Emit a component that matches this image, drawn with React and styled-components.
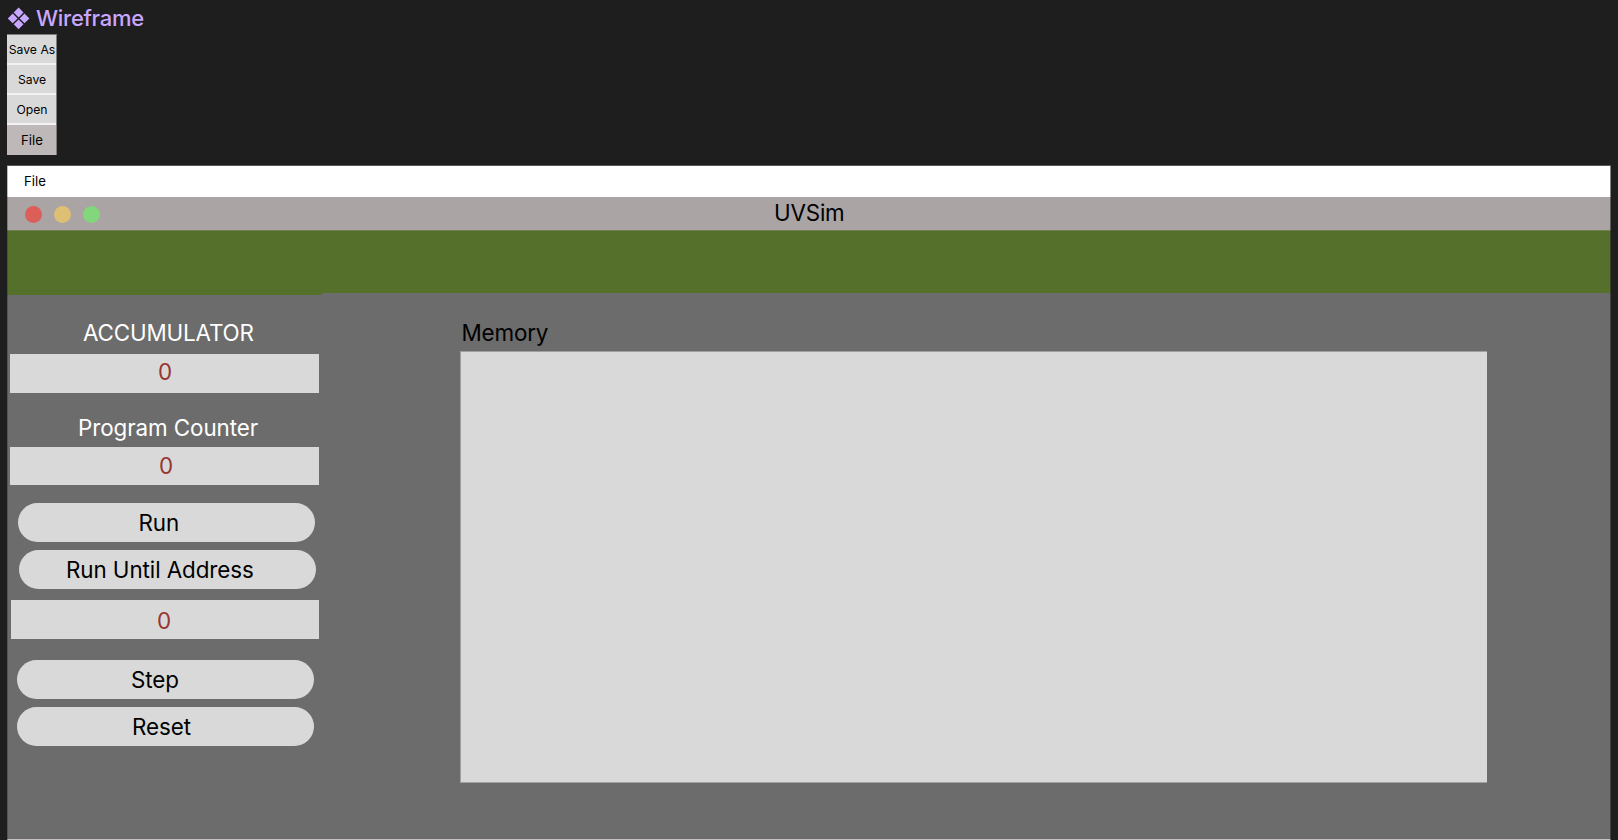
import React from "react";
import styled, { createGlobalStyle } from "styled-components";

const GlobalStyle = createGlobalStyle`
  * { box-sizing: border-box; }
  body {
    margin: 0;
    background: #1e1e1e;
    font-family: Inter, "Liberation Sans", sans-serif;
    font-weight: 400;
    color: #000;
    overflow: hidden;
  }
`;

const Canvas = styled.div`
  height: 840px;
  padding: 0 7px;
  display: flex;
  flex-direction: column;
  background: #1e1e1e;
`;

const FrameTitle = styled.header`
  display: flex;
  align-items: center;
  gap: 6px;
  height: 34px;
  padding-top: 2px;
  color: #c9a7ff;
  font-size: 22px;
  font-weight: 500;
  letter-spacing: -0.27px;
  line-height: 32px;
  white-space: nowrap;
`;

const ComponentIcon = styled.svg`
  width: 23px;
  height: 23px;
  flex: none;
`;

const FileMenu = styled.nav`
  width: 50px;
  display: flex;
  flex-direction: column;
  border: solid #7c7c7c;
  border-width: 1px 1px 0 0;
  margin-bottom: 10px;
`;

const MenuItem = styled.div`
  height: 30px;
  flex: none;
  padding: ${(p) => (p.$active ? 0 : 1)}px 0 0 1px;
  border-bottom: ${(p) => (p.$active ? "0" : "2px solid #f2f2f2")};
  background: ${(p) => (p.$active ? "#bfb8b8" : "#d9d9d9")};
  font-size: ${(p) => (p.$active ? 13.2 : 12.2)}px;
  line-height: ${(p) => (p.$active ? 30 : 28)}px;
  text-align: center;
  white-space: nowrap;
`;

const Window = styled.main`
  position: relative;
  flex: 1;
  display: flex;
  flex-direction: column;
  width: 1604px;
  border-top: 1px solid #575757;

  &::after {
    content: "";
    position: absolute;
    inset: 0;
    border: solid rgba(30, 30, 30, 0.3);
    border-width: 0 1px;
    border-right-color: rgba(30, 30, 30, 0.55);
    pointer-events: none;
  }
`;

const MenuBar = styled.div`
  height: 31px;
  padding-left: 17px;
  background: #fff;
  font-size: 13.2px;
  line-height: 30px;
`;

const TitleBar = styled.div`
  display: flex;
  align-items: center;
  height: 33px;
  padding-left: 18px;
  background: #aaa4a4;
`;

const Lights = styled.div`
  display: flex;
  gap: 12px;
  width: 749px;
  padding-top: 2px;
`;

const Light = styled.span`
  width: 17px;
  height: 17px;
  border-radius: 50%;
  background: ${(p) => p.$color};
`;

const Title = styled.h1`
  margin: 0;
  font-size: 22.4px;
  font-weight: 400;
  letter-spacing: -0.2px;
  line-height: 30px;
  padding-bottom: 1px;
`;

const Banner = styled.div`
  height: 63px;
  background: #55702a;
  border-top: 1px solid #71804d;
`;

const Workspace = styled.div`
  flex: 1;
  display: flex;
  background: #6c6c6c;
  border-bottom: 1px solid #c6c0c0;
`;

const Sidebar = styled.aside`
  width: 315px;
  display: flex;
  flex-direction: column;
  border-top: 2px solid #55702a;
`;

const Label = styled.div`
  height: 30px;
  margin-top: ${(p) => p.$top}px;
  padding-left: ${(p) => p.$indent}px;
  color: ${(p) => p.$color || "#fff"};
  font-size: 22.4px;
  letter-spacing: ${(p) => p.$spacing || -0.15}px;
  line-height: ${(p) => p.$line || 30}px;
  white-space: nowrap;
`;

const Field = styled.div`
  width: ${(p) => p.$width || 309}px;
  height: ${(p) => p.$height || 39}px;
  margin: ${(p) => p.$top}px 0 0 ${(p) => p.$left || 3}px;
  padding-left: ${(p) => p.$indent}px;
  background: #d9d9d9;
  color: #983531;
  font-size: 22.4px;
  line-height: ${(p) => p.$line || 39}px;
`;

const Button = styled.button`
  width: 297px;
  height: 39px;
  margin: ${(p) => p.$top}px 0 0 ${(p) => p.$left}px;
  padding: 0 0 0 ${(p) => p.$indent}px;
  border: 0;
  border-radius: 20px;
  background: #d9d9d9;
  color: #000;
  font-family: inherit;
  font-weight: inherit;
  font-size: 22.4px;
  letter-spacing: -0.08px;
  line-height: 39px;
  text-align: left;
  white-space: nowrap;
`;

const MemorySection = styled.section`
  margin-left: 138px;
  width: 1027px;
`;

const MemoryPanel = styled.div`
  height: 432px;
  margin-top: 3px;
  background: #d9d9d9;
  border: solid #a0a0a0;
  border-width: 1px 0 1px 1px;
`;

export default function App() {
  return (
    <>
      <GlobalStyle />
      <Canvas>
        <FrameTitle>
          <ComponentIcon viewBox="0 0 23 23" fill="currentColor">
            <path d="M11.6 0.6l4.9 4.9-4.9 4.9-4.9-4.9zM5.7 6.5l4.9 4.9-4.9 4.9L.8 11.4zM17.5 6.5l4.9 4.9-4.9 4.9-4.9-4.9zM11.6 12.4l4.9 4.9-4.9 4.9-4.9-4.9z" />
          </ComponentIcon>
          Wireframe
        </FrameTitle>
        <FileMenu>
          <MenuItem>Save As</MenuItem>
          <MenuItem>Save</MenuItem>
          <MenuItem>Open</MenuItem>
          <MenuItem $active>File</MenuItem>
        </FileMenu>
        <Window>
          <MenuBar>File</MenuBar>
          <TitleBar>
            <Lights>
              <Light $color="#dc5e58" />
              <Light $color="#dec074" />
              <Light $color="#82d67c" />
            </Lights>
            <Title>UVSim</Title>
          </TitleBar>
          <Banner />
          <Workspace>
            <Sidebar>
              <Label $top={23} $indent={76}>ACCUMULATOR</Label>
              <Field $top={6} $indent={148} $line={36}>0</Field>
              <Label $top={19} $indent={71} $line={31} $spacing={-0.08}>Program Counter</Label>
              <Field $top={5} $height={38} $indent={149} $line={38}>0</Field>
              <Button $top={18} $left={11} $indent={120.5}>Run</Button>
              <Button $top={8} $left={12} $indent={47}>Run Until Address</Button>
              <Field $top={11} $left={4} $width={308} $indent={146} $line={41}>0</Field>
              <Button $top={21} $left={10} $indent={114}>Step</Button>
              <Button $top={8} $left={10} $indent={115}>Reset</Button>
            </Sidebar>
            <MemorySection>
              <Label $top={25} $indent={1.5} $color="#000">Memory</Label>
              <MemoryPanel />
            </MemorySection>
          </Workspace>
        </Window>
      </Canvas>
    </>
  );
}
